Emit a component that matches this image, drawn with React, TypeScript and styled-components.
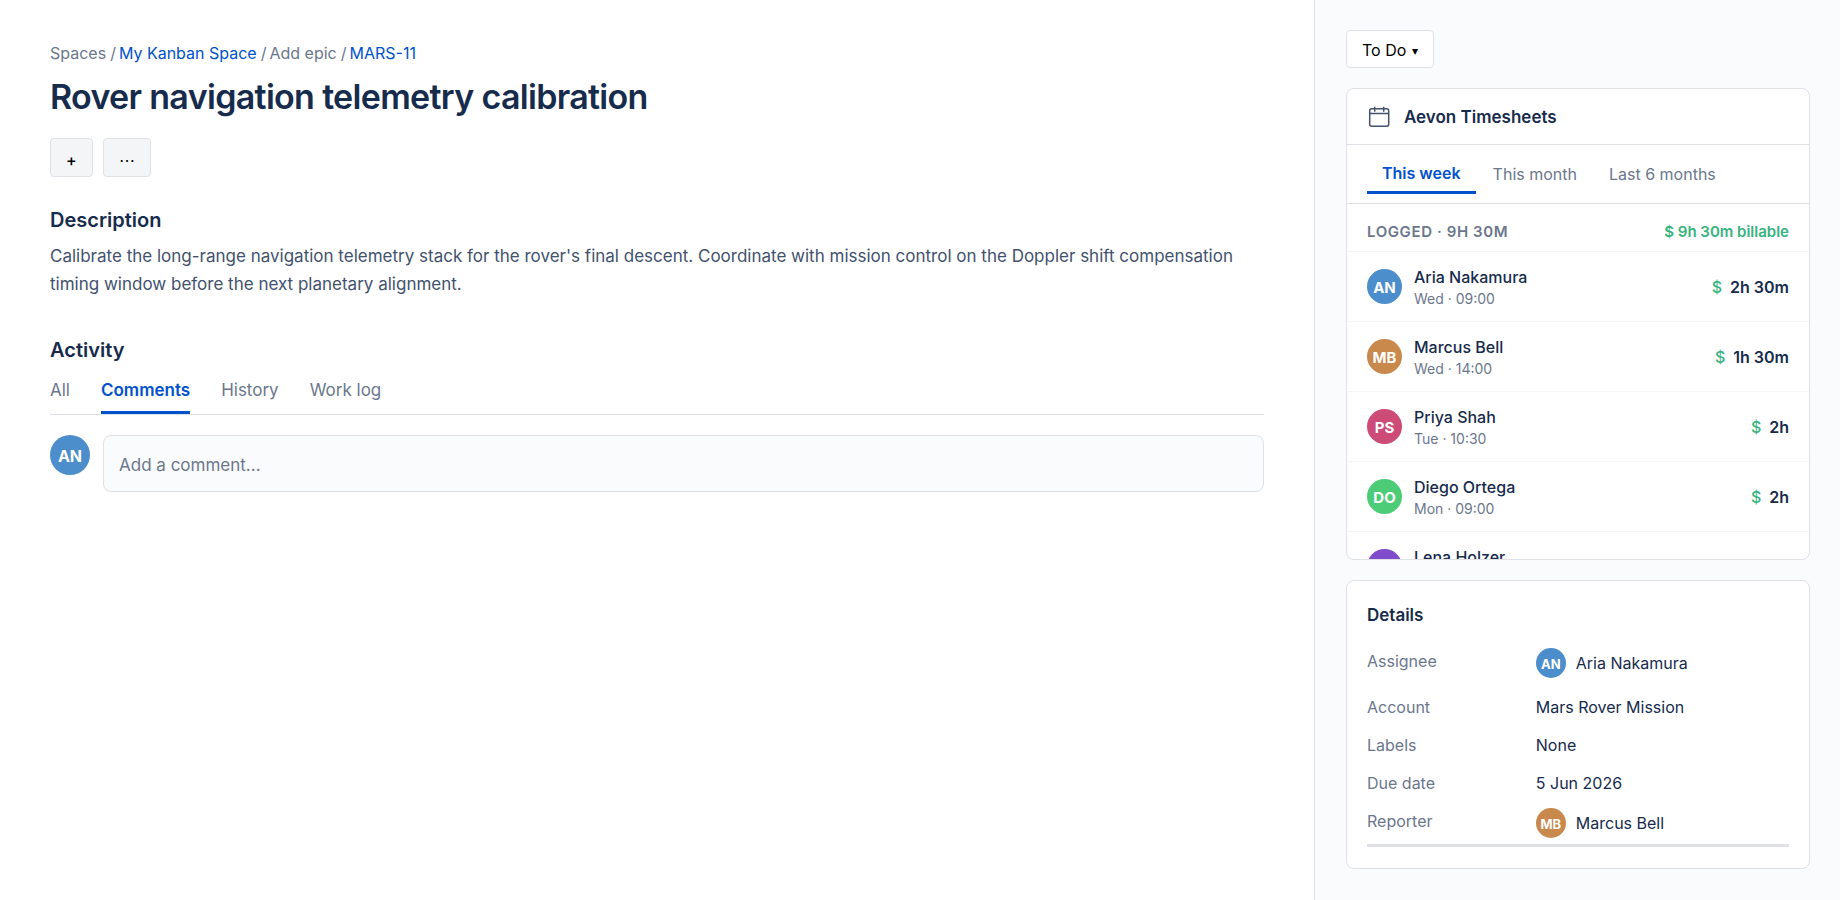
import React from "react";
import styled, { createGlobalStyle } from "styled-components";

const c = {
  ink: "#172b4d",
  body: "#42526e",
  muted: "#6b778c",
  link: "#0052cc",
  line: "#dfe1e6",
  faint: "#f4f5f7",
  surface: "#fafbfc",
  green: "#36b37e",
};

const GlobalStyle = createGlobalStyle`
  * { box-sizing: border-box; }
  body { margin: 0; background: #fff; color: ${c.ink}; }
  body, button, input, select { font-family: Inter, "Liberation Sans", sans-serif; }
  h1, h2, p, ul, ol, dl, dd { margin: 0; padding: 0; }
  ul, ol { list-style: none; }
`;

const Page = styled.div`
  display: grid;
  grid-template-columns: minmax(0, 1fr) 526px;
  min-height: 100vh;
`;

const Main = styled.main`
  padding: 40px 50px;
`;

const Aside = styled.aside`
  display: flex;
  flex-direction: column;
  align-items: stretch;
  gap: 20px;
  padding: 30px 30px 30px 31px;
  border-left: 1px solid ${c.line};
  background: ${c.surface};
`;

const Crumbs = styled.ol`
  display: flex;
  gap: 3px;
  font-size: 16px;
  line-height: 26px;
  color: ${c.muted};
`;

const Crumb = styled.li`
  display: flex;
  gap: 4px;

  &:not(:last-child)::after {
    content: "/";
  }
`;

const Link = styled.a`
  color: ${c.link};
  text-decoration: none;
`;

const Title = styled.h1`
  margin-top: 10px;
  font-size: 34px;
  line-height: 42px;
  font-weight: 600;
  letter-spacing: -0.02em;
`;

const Actions = styled.div`
  display: flex;
  gap: 10px;
  margin-top: 20px;
`;

const ActionButton = styled.button`
  height: 39px;
  padding: 5px 15px 0;
  border: 1px solid ${c.line};
  border-radius: 4px;
  background: ${c.faint};
  color: #000;
  font-size: 16px;
  font-weight: 500;
`;

const Section = styled.section`
  margin-top: 30px;

  & + & {
    margin-top: 39px;
  }
`;

const SectionTitle = styled.h2`
  font-size: 20px;
  line-height: 26px;
  font-weight: 600;
`;

const Paragraph = styled.p`
  margin-top: 9px;
  font-size: 17px;
  line-height: 28px;
  color: ${c.body};
`;

const ActivityTabs = styled.div`
  display: flex;
  gap: 31px;
  margin-top: 5px;
  border-bottom: 1px solid ${c.line};
`;

const ActivityTab = styled.button<{ $active?: boolean }>`
  padding: 10px 0 9px;
  border: 0;
  border-bottom: 3px solid ${(p) => (p.$active ? c.link : "transparent")};
  background: none;
  color: ${(p) => (p.$active ? c.link : c.muted)};
  font-size: 17px;
  line-height: 24px;
  font-weight: ${(p) => (p.$active ? 600 : 400)};
`;

const Composer = styled.form`
  display: flex;
  gap: 13px;
  margin-top: 20px;
`;

const CommentInput = styled.input`
  flex: 1;
  min-width: 0;
  height: 57px;
  padding: 2px 15px 0;
  border: 1px solid ${c.line};
  border-radius: 8px;
  background: ${c.surface};
  font-size: 17px;

  &::placeholder {
    color: ${c.muted};
    opacity: 1;
  }
`;

const Avatar = styled.span<{ $color: string; $size: number; $font: number }>`
  display: flex;
  flex: none;
  align-items: center;
  justify-content: center;
  width: ${(p) => p.$size}px;
  height: ${(p) => p.$size}px;
  padding-top: 2px;
  border-radius: 50%;
  background: ${(p) => p.$color};
  color: #fff;
  font-size: ${(p) => p.$font}px;
  font-weight: 700;
`;

const StatusField = styled.label`
  display: flex;
  align-self: flex-start;
  align-items: center;
  gap: 6px;
  height: 38px;
  padding: 2px 15px 0;
  border: 1px solid ${c.line};
  border-radius: 4px;
  background: #fff;
  color: #000;
  font-size: 16px;
`;

const StatusSelect = styled.select`
  field-sizing: content;
  appearance: none;
  padding: 0;
  border: 0;
  background: none;
  color: inherit;
  font-size: inherit;
`;

const Caret = styled.span`
  font-size: 12px;
`;

const Card = styled.section`
  border: 1px solid ${c.line};
  border-radius: 8px;
  background: #fff;
`;

const TimesheetCard = styled(Card)`
  max-height: 472px;
  overflow: hidden;
`;

const CardHeader = styled.header`
  display: flex;
  align-items: center;
  gap: 13px;
  height: 56px;
  padding: 0 20px;
  border-bottom: 1px solid ${c.line};
`;

const CardTitle = styled.h2`
  font-size: 17px;
  line-height: 24px;
  font-weight: 600;
`;

const RangeTabs = styled.div`
  display: flex;
  align-items: center;
  gap: 2px;
  height: 59px;
  padding: 0 20px;
  border-bottom: 1px solid ${c.line};
`;

const RangeTab = styled.button<{ $active?: boolean }>`
  padding: 8px 15px;
  border: 0;
  border-bottom: ${(p) => (p.$active ? `3px solid ${c.link}` : "0")};
  background: none;
  color: ${(p) => (p.$active ? c.link : c.muted)};
  font-size: 16px;
  line-height: 20px;
  font-weight: ${(p) => (p.$active ? 600 : 400)};
`;

const Summary = styled.div`
  display: flex;
  align-items: center;
  justify-content: space-between;
  height: 48px;
  padding: 7px 20px 0;
  border-bottom: 1px solid ${c.faint};
  color: ${c.muted};
  font-size: 15px;
  font-weight: 600;
`;

const Logged = styled.span`
  letter-spacing: 0.04em;
  text-transform: uppercase;
`;

const Billable = styled.span`
  color: ${c.green};
`;

const Entry = styled.li`
  display: flex;
  align-items: center;
  gap: 12px;
  height: 70px;
  padding: 0 20px;
  border-bottom: 1px solid ${c.faint};
`;

const EntryText = styled.div`
  flex: 1;
  min-width: 0;
`;

const EntryName = styled.div`
  font-size: 16px;
  line-height: 24px;
  font-weight: 500;
`;

const EntryTime = styled.div`
  font-size: 14px;
  line-height: 20px;
  color: ${c.muted};
`;

const Duration = styled.div`
  display: flex;
  gap: 8px;
  font-size: 16px;
  font-weight: 600;
`;

const Dollar = styled.span`
  color: ${c.green};
  font-weight: 500;
`;

const DetailsCard = styled(Card)`
  padding: 22px 20px 21px;
`;

const Fields = styled.dl`
  display: grid;
  grid-template-columns: 2fr 3fr;
  row-gap: 12px;
  margin-top: 21px;
  padding-bottom: 2px;
  border-bottom: 3px solid ${c.line};
  font-size: 16px;
  line-height: 26px;
`;

const Term = styled.dt`
  color: ${c.muted};
`;

const Value = styled.dd<{ $person?: boolean }>`
  display: flex;
  align-items: center;
  gap: 10px;
  padding-bottom: ${(p) => (p.$person ? 4 : 0)}px;
`;

const CalendarIcon = () => (
  <svg width="24" height="24" viewBox="0 0 24 24" fill="none" stroke={c.body} strokeWidth="1.5" aria-hidden="true">
    <rect x="2.7" y="3.7" width="19" height="17.6" rx="2" />
    <path d="M2.7 8.6h19M7.7 1.8v5M16.7 1.8v5" />
  </svg>
);

const people = {
  aria: { name: "Aria Nakamura", initials: "AN", color: "#4c8dcc" },
  marcus: { name: "Marcus Bell", initials: "MB", color: "#c9884c" },
  priya: { name: "Priya Shah", initials: "PS", color: "#cc4c77" },
  diego: { name: "Diego Ortega", initials: "DO", color: "#4ccc77" },
  lena: { name: "Lena Holzer", initials: "LH", color: "#804ccc" },
};

const entries = [
  { who: people.aria, when: "Wed · 09:00", spent: "2h 30m" },
  { who: people.marcus, when: "Wed · 14:00", spent: "1h 30m" },
  { who: people.priya, when: "Tue · 10:30", spent: "2h" },
  { who: people.diego, when: "Mon · 09:00", spent: "2h" },
  { who: people.lena, when: "Mon · 14:00", spent: "1h 30m" },
];

const fields = [
  { label: "Assignee", who: people.aria },
  { label: "Account", text: "Mars Rover Mission" },
  { label: "Labels", text: "None" },
  { label: "Due date", text: "5 Jun 2026" },
  { label: "Reporter", who: people.marcus },
];

export default function App() {
  return (
    <Page>
      <GlobalStyle />
      <Main>
        <nav aria-label="Breadcrumb">
          <Crumbs>
            <Crumb>Spaces</Crumb>
            <Crumb><Link href="#space">My Kanban Space</Link></Crumb>
            <Crumb>Add epic</Crumb>
            <Crumb><Link href="#issue">MARS-11</Link></Crumb>
          </Crumbs>
        </nav>
        <Title>Rover navigation telemetry calibration</Title>
        <Actions>
          <ActionButton type="button" aria-label="Add">+</ActionButton>
          <ActionButton type="button" aria-label="More actions">⋯</ActionButton>
        </Actions>
        <Section>
          <SectionTitle>Description</SectionTitle>
          <Paragraph>
            Calibrate the long-range navigation telemetry stack for the rover's final descent. Coordinate with mission
            control on the Doppler shift compensation timing window before the next planetary alignment.
          </Paragraph>
        </Section>
        <Section>
          <SectionTitle>Activity</SectionTitle>
          <ActivityTabs role="tablist">
            {["All", "Comments", "History", "Work log"].map((t) => (
              <ActivityTab key={t} type="button" role="tab" aria-selected={t === "Comments"} $active={t === "Comments"}>
                {t}
              </ActivityTab>
            ))}
          </ActivityTabs>
          <Composer>
            <Avatar $color={people.aria.color} $size={40} $font={16}>AN</Avatar>
            <CommentInput type="text" aria-label="Comment" placeholder="Add a comment..." />
          </Composer>
        </Section>
      </Main>
      <Aside>
        <StatusField>
          <StatusSelect aria-label="Status" defaultValue="To Do">
            <option>To Do</option>
            <option>In Progress</option>
            <option>Done</option>
          </StatusSelect>
          <Caret aria-hidden="true">▾</Caret>
        </StatusField>
        <TimesheetCard>
          <CardHeader>
            <CalendarIcon />
            <CardTitle>Aevon Timesheets</CardTitle>
          </CardHeader>
          <RangeTabs role="tablist">
            {["This week", "This month", "Last 6 months"].map((t) => (
              <RangeTab key={t} type="button" role="tab" aria-selected={t === "This week"} $active={t === "This week"}>
                {t}
              </RangeTab>
            ))}
          </RangeTabs>
          <Summary>
            <Logged>Logged · 9h 30m</Logged>
            <Billable>$ 9h 30m billable</Billable>
          </Summary>
          <ul>
            {entries.map((e) => (
              <Entry key={e.who.initials}>
                <Avatar $color={e.who.color} $size={35} $font={15}>{e.who.initials}</Avatar>
                <EntryText>
                  <EntryName>{e.who.name}</EntryName>
                  <EntryTime>{e.when}</EntryTime>
                </EntryText>
                <Duration>
                  <Dollar>$</Dollar>
                  {e.spent}
                </Duration>
              </Entry>
            ))}
          </ul>
        </TimesheetCard>
        <DetailsCard>
          <CardTitle>Details</CardTitle>
          <Fields>
            {fields.map((f) => (
              <React.Fragment key={f.label}>
                <Term>{f.label}</Term>
                <Value $person={!!f.who}>
                  {f.who && <Avatar $color={f.who.color} $size={30} $font={13}>{f.who.initials}</Avatar>}
                  {f.who ? f.who.name : f.text}
                </Value>
              </React.Fragment>
            ))}
          </Fields>
        </DetailsCard>
      </Aside>
    </Page>
  );
}
